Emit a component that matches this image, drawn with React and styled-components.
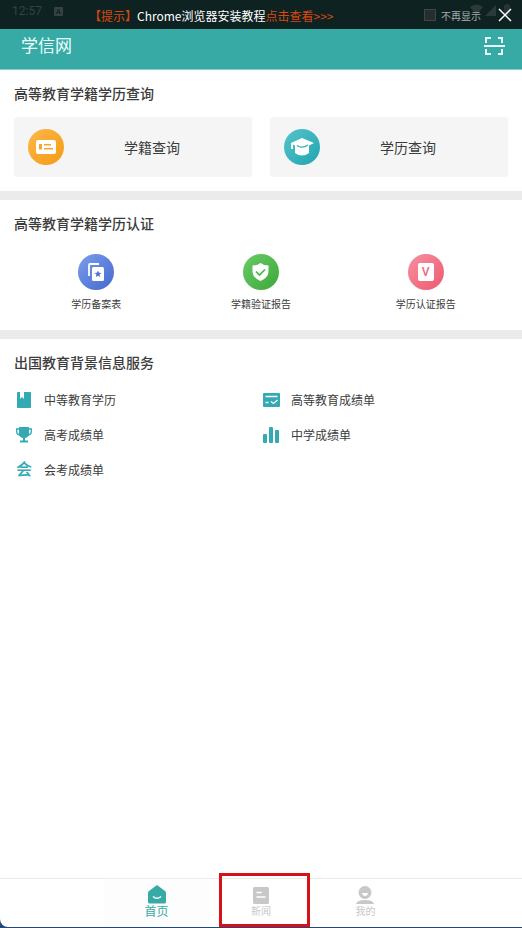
import styled, { createGlobalStyle } from "styled-components";

const GlobalStyle = createGlobalStyle`
    * {
        box-sizing: border-box;
    }

    body {
        margin: 0;
        background: #24467e;
        color: #3c3c3c;
        font-family: Roboto, "Noto Sans CJK SC", sans-serif;
    }

    button {
        padding: 0;
        border: 0;
        background: none;
        color: inherit;
        font-family: inherit;
        cursor: pointer;
    }

    svg {
        display: block;
        flex-shrink: 0;
    }
`;

const Page = styled.div`
    display: flex;
    flex-direction: column;
    min-height: calc(100vh - 1px);
    background: #fff;
    border-bottom-left-radius: 8px;
`;

const Promo = styled.aside`
    position: relative;
    display: flex;
    align-items: center;
    height: 29px;
    padding: 1px 10px 0 89px;
    background: #0e2221;
    color: #fff;
    font-family: "Noto Sans CJK SC", sans-serif;
    font-size: 12px;
`;

const StatusTime = styled.span`
    position: absolute;
    left: 12px;
    top: 3px;
    display: flex;
    align-items: center;
    gap: 12px;
    color: #344443;
    font-family: Roboto, sans-serif;
    font-size: 12px;
    line-height: 16px;
`;

const StatusSignal = styled.span`
    position: absolute;
    right: 12px;
    top: 3px;
`;

const PromoLink = styled.a`
    color: ${(props) => (props.$accent ? "#d9480f" : "#fff")};
    text-decoration: none;
    white-space: nowrap;
`;

const PromoActions = styled.div`
    position: relative;
    display: flex;
    align-items: center;
    gap: 17px;
    margin-left: auto;
`;

const Mute = styled.label`
    display: flex;
    align-items: center;
    gap: 5px;
    color: #a5adac;
    font-size: 10px;
    white-space: nowrap;

    input {
        appearance: none;
        width: 12px;
        height: 12px;
        margin: 0;
        border: 1px solid #3c4646;
        background: #252e2e;
    }
`;

const AppBar = styled.header`
    display: flex;
    align-items: center;
    justify-content: space-between;
    padding: 5px 17px 11px 21px;
    border-bottom: 1px solid #8ccbc7;
    background: #38aaa5;
    color: #e8ffff;

    h1 {
        margin: 0;
        font-size: 17px;
        font-weight: 400;
        line-height: 24px;
    }
`;

const Content = styled.main`
    flex: 1;
`;

const Section = styled.section`
    padding: 14px;
    border-bottom: ${(props) => (props.$last ? "0" : "9px solid #ebebeb")};
`;

const Heading = styled.h2`
    margin: 0 0 ${(props) => props.$gap}px;
    font-size: 14px;
    font-weight: 500;
    line-height: 20px;
`;

const Cards = styled.div`
    display: grid;
    grid-template-columns: 1fr 1fr;
    gap: 18px;
`;

const Card = styled.button`
    && {
        display: flex;
        align-items: center;
        height: 60px;
        padding: 0 12px 0 14px;
        border-radius: 3px;
        background: #f5f5f5;
        font-size: 14px;
    }

    span:last-child {
        flex: 1;
    }
`;

const Badge = styled.span`
    display: flex;
    align-items: center;
    justify-content: center;
    width: 36px;
    height: 36px;
    border-radius: 50%;
    background: linear-gradient(135deg, ${(props) => props.$from}, ${(props) => props.$to});
`;

const Reports = styled.div`
    display: grid;
    grid-template-columns: repeat(3, 1fr);
    padding-bottom: 3px;
`;

const Report = styled.button`
    display: flex;
    flex-direction: column;
    align-items: center;
    gap: 7px;
    font-size: 10px;
    line-height: 16px;
`;

const Services = styled.div`
    display: grid;
    grid-template-columns: 1fr 1fr;
`;

const Service = styled.button`
    display: flex;
    align-items: center;
    gap: 10px;
    height: 35px;
    font-size: 12px;
`;

const ServiceIcon = styled.span`
    display: flex;
    align-items: center;
    justify-content: center;
    width: 20px;
    color: #32a9b3;
    font-size: 16px;
    font-weight: 500;
    line-height: 20px;
`;

const TabBar = styled.nav`
    display: grid;
    grid-template-columns: repeat(3, 1fr);
    height: 49px;
    padding: 0 20%;
    border-top: 1px solid #ebebeb;
`;

const Tab = styled.button`
    && {
        position: relative;
        display: flex;
        flex-direction: column;
        align-items: center;
        padding-top: 6px;
        background: ${(props) => (props.$active ? "#fdfdfd" : "none")};
        color: ${(props) => (props.$active ? "#38aaa5" : "#c8c8c8")};
        font-size: ${(props) => (props.$active ? 12 : 10)}px;
        line-height: 16px;
    }
`;

const Highlight = styled.span`
    position: absolute;
    top: -6px;
    right: 3px;
    bottom: 0;
    left: 10px;
    border: 3px solid #d41217;
`;

const BadgeLetter = styled.span`
    width: 16px;
    border-radius: 2px;
    background: #fff;
    color: #f0667c;
    font-size: 12px;
    font-weight: 500;
    line-height: 18px;
    text-align: center;
`;

const AppMark = () => (
    <svg width="9" height="9" viewBox="0 0 9 9">
        <rect width="9" height="9" rx="1" fill="#344241" />
        <path d="M2.5 7 4.5 2 6.5 7M3.3 5.5h2.4" fill="none" stroke="#0e2221" />
    </svg>
);

const SignalIcon = () => (
    <svg width="40" height="14" viewBox="0 0 40 14">
        <path d="M0 4Q6.500-1 13 4L6.500 12Z" fill="#2b3938" />
        <path d="M26 2v11H15Z" fill="#2b3938" />
        <path d="M34 2h2V1h3v1h1v11h-6Z" fill="#263433" />
    </svg>
);

const CloseIcon = () => (
    <svg width="14" height="14" viewBox="0 0 14 14" fill="none" stroke="#fff" strokeWidth="1.500">
        <path d="M1 1 13 13M13 1 1 13" />
    </svg>
);

const ScanIcon = () => (
    <svg width="21" height="18" viewBox="0 0 21 18" fill="none" stroke="#e8ffff" strokeWidth="2">
        <path d="M2 6V1h5M14 1h4v5M2 12v5h5M14 17h4v-5M0 9h21" />
    </svg>
);

const CardIcon = () => (
    <svg width="20" height="14" viewBox="0 0 20 14">
        <rect width="20" height="14" rx="2" fill="#fff" />
        <path d="M3 4h3v5.500H3ZM8 4h7v1.500H8ZM8 8h9v1.500H8Z" fill="#f8a52c" />
    </svg>
);

const CapIcon = () => (
    <svg width="24" height="18" viewBox="0 0 24 18">
        <path d="M12 0 24 5 19 7.500V15Q12 20 5 15V7.500L3 6.500V11H1V5Z" fill="#fff" />
        <path d="M7 7.500Q12 11 18 7" fill="none" stroke="#36afb9" strokeWidth="1.300" />
    </svg>
);

const CopyIcon = () => (
    <svg width="16" height="18" viewBox="0 0 16 18">
        <path d="M1 13V2Q1 1 2 1H11" fill="none" stroke="#fff" strokeWidth="1.800" />
        <rect x="4" y="4" width="12" height="14" rx="1.500" fill="#fff" />
        <path d="m10 7.500 1 2.300 2.500.2-1.900 1.600.6 2.400-2.200-1.300L7.800 14l.6-2.400L6.500 10l2.500-.2Z" fill="#4c73d5" />
    </svg>
);

const ShieldIcon = () => (
    <svg width="17" height="18" viewBox="0 0 17 18">
        <path d="M8.500 0Q12 2.500 16.500 2.500V9Q16 15 8.500 18 1 15 .5 9V2.500Q5 2.500 8.500 0Z" fill="#fff" />
        <path d="m4 8.500 3.500 3.500L13 6.500" fill="none" stroke="#4bb648" strokeWidth="1.700" />
    </svg>
);

const BookIcon = () => (
    <svg width="14" height="16" viewBox="0 0 14 16" fill="currentColor">
        <path d="M1 0h2v7l2-2 2 2V0h6q1 0 1 1v14q0 1-1 1H1q-1 0-1-1V1q0-1 1-1Z" />
    </svg>
);

const TranscriptIcon = () => (
    <svg width="17" height="14" viewBox="0 0 17 14">
        <rect width="17" height="14" rx="1" fill="currentColor" />
        <path d="M2.500 3.500h12M2.500 9.500h3M8 8.500l2.500 2 4-3.500" fill="none" stroke="#fff" strokeWidth="1.300" />
    </svg>
);

const TrophyIcon = () => (
    <svg width="16" height="16" viewBox="0 0 16 16">
        <path d="M3 0h10v7q0 3-4 4v2.500h3V15.500H4V13.500h3V11Q3 10 3 7Z" fill="currentColor" />
        <path d="M3 2H.7v3Q.7 7.500 4 8M13 2h2.300v3Q15.300 7.500 12 8" fill="none" stroke="currentColor" strokeWidth="1.300" />
    </svg>
);

const BarsIcon = () => (
    <svg width="16" height="16" viewBox="0 0 16 16" fill="currentColor">
        <rect y="7" width="4" height="9" rx="1" />
        <rect x="6" width="4" height="16" rx="1" />
        <rect x="12" y="3" width="4" height="13" rx="1" />
    </svg>
);

const HomeIcon = () => (
    <svg width="18" height="19" viewBox="0 0 18 19">
        <path d="M9 0 17 6Q18 6.700 18 8V17q0 1.500-1.500 1.500h-15Q0 18.500 0 17V8Q0 6.700 1 6Z" fill="currentColor" />
        <path d="M5 11.500Q9 15 13 11.500" fill="none" stroke="#fff" strokeWidth="1.500" />
    </svg>
);

const NewsIcon = () => (
    <svg width="16" height="19" viewBox="0 0 16 19">
        <rect y="2" width="16" height="17" rx="1.500" fill="currentColor" />
        <path d="M3.500 7.500H9M3.500 12H12.500" stroke="#fff" strokeWidth="1.600" />
    </svg>
);

const UserIcon = () => (
    <svg width="18" height="19" viewBox="0 0 18 19">
        <circle cx="9" cy="7.500" r="6.500" fill="currentColor" />
        <path d="M6 8h6q-.5 3-3 3T6 8Z" fill="#fff" />
        <path d="M0 19q1-4 9-4t9 4Z" fill="currentColor" />
    </svg>
);

const reports = [
    { label: "学历备案表", from: "#7a9eee", to: "#4568cd", icon: <CopyIcon /> },
    { label: "学籍验证报告", from: "#6acb65", to: "#3ca83b", icon: <ShieldIcon /> },
    { label: "学历认证报告", from: "#f791a0", to: "#ef5870", icon: <BadgeLetter>V</BadgeLetter> },
];

const services = [
    { label: "中等教育学历", icon: <BookIcon /> },
    { label: "高等教育成绩单", icon: <TranscriptIcon /> },
    { label: "高考成绩单", icon: <TrophyIcon /> },
    { label: "中学成绩单", icon: <BarsIcon /> },
    { label: "会考成绩单", icon: "会" },
];

const App = () => {
    return (
        <>
            <GlobalStyle />
            <Page>
                <Promo>
                    <StatusTime>
                        12:57
                        <AppMark />
                    </StatusTime>
                    <StatusSignal>
                        <SignalIcon />
                    </StatusSignal>
                    <PromoLink href="#tips" $accent>【提示】</PromoLink>
                    <PromoLink href="#tips">Chrome浏览器安装教程</PromoLink>
                    <PromoLink href="#tips" $accent>点击查看&gt;&gt;&gt;</PromoLink>
                    <PromoActions>
                        <Mute>
                            <input type="checkbox" />
                            不再显示
                        </Mute>
                        <button type="button" aria-label="关闭">
                            <CloseIcon />
                        </button>
                    </PromoActions>
                </Promo>

                <AppBar>
                    <h1>学信网</h1>
                    <button type="button" aria-label="扫一扫">
                        <ScanIcon />
                    </button>
                </AppBar>

                <Content>
                    <Section>
                        <Heading $gap={13}>高等教育学籍学历查询</Heading>
                        <Cards>
                            <Card type="button">
                                <Badge $from="#fbb74a" $to="#f79a13">
                                    <CardIcon />
                                </Badge>
                                <span>学籍查询</span>
                            </Card>
                            <Card type="button">
                                <Badge $from="#58c3ca" $to="#20a5b0">
                                    <CapIcon />
                                </Badge>
                                <span>学历查询</span>
                            </Card>
                        </Cards>
                    </Section>

                    <Section>
                        <Heading $gap={20}>高等教育学籍学历认证</Heading>
                        <Reports>
                            {reports.map((item) => (
                                <Report type="button" key={item.label}>
                                    <Badge $from={item.from} $to={item.to}>{item.icon}</Badge>
                                    <span>{item.label}</span>
                                </Report>
                            ))}
                        </Reports>
                    </Section>

                    <Section $last>
                        <Heading $gap={9}>出国教育背景信息服务</Heading>
                        <Services>
                            {services.map((item) => (
                                <Service type="button" key={item.label}>
                                    <ServiceIcon aria-hidden="true">{item.icon}</ServiceIcon>
                                    <span>{item.label}</span>
                                </Service>
                            ))}
                        </Services>
                    </Section>
                </Content>

                <TabBar>
                    <Tab type="button" $active>
                        <HomeIcon />
                        首页
                    </Tab>
                    <Tab type="button">
                        <NewsIcon />
                        新闻
                        <Highlight />
                    </Tab>
                    <Tab type="button">
                        <UserIcon />
                        我的
                    </Tab>
                </TabBar>
            </Page>
        </>
    );
};

export default App;
